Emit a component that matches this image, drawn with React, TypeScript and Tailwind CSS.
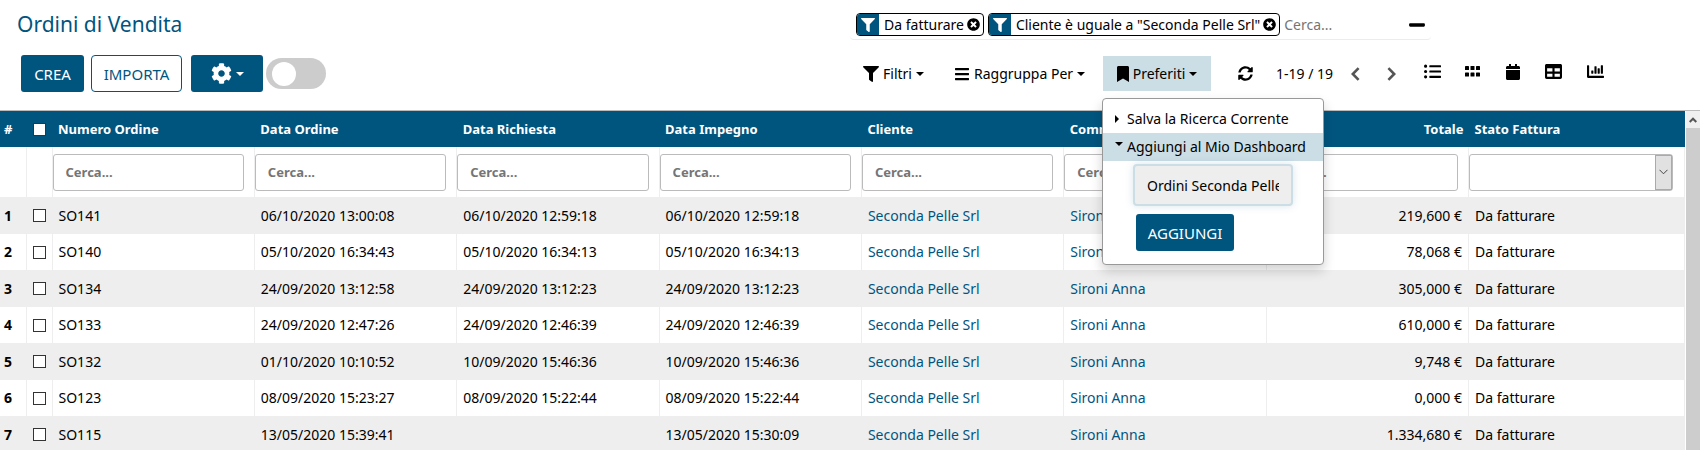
import { useState } from "react";
import {
  FaBars, FaBookmark, FaCalendar, FaChartBar, FaCog, FaFilter, FaListUl, FaMinus, FaSyncAlt, FaTable, FaTimesCircle,
} from "react-icons/fa";

const orders = [
  ["SO141", "06/10/2020 13:00:08", "06/10/2020 12:59:18", "06/10/2020 12:59:18", "219,600 €"],
  ["SO140", "05/10/2020 16:34:43", "05/10/2020 16:34:13", "05/10/2020 16:34:13", "78,068 €"],
  ["SO134", "24/09/2020 13:12:58", "24/09/2020 13:12:23", "24/09/2020 13:12:23", "305,000 €"],
  ["SO133", "24/09/2020 12:47:26", "24/09/2020 12:46:39", "24/09/2020 12:46:39", "610,000 €"],
  ["SO132", "01/10/2020 10:10:52", "10/09/2020 15:46:36", "10/09/2020 15:46:36", "9,748 €"],
  ["SO123", "08/09/2020 15:23:27", "08/09/2020 15:22:44", "08/09/2020 15:22:44", "0,000 €"],
  ["SO115", "13/05/2020 15:39:41", "", "13/05/2020 15:30:09", "1.334,680 €"],
];

const columns = ["Numero Ordine", "Data Ordine", "Data Richiesta", "Data Impegno", "Cliente", "Commerciale", "Totale"];

function Caret() {
  return (
    <svg viewBox="0 0 8 4" className="h-1 w-2 shrink-0 fill-current" aria-hidden="true">
      <path d="M0 0h8L4 4z" />
    </svg>
  );
}

function GridIcon() {
  return (
    <svg viewBox="0 0 15 11" className="h-[11px] w-[15px] fill-current" aria-hidden="true">
      {[0, 5.5, 11].map((x) => [0, 6.5].map((y) => <rect key={`${x}-${y}`} x={x} y={y} width="4" height="4" rx="0.6" />))}
    </svg>
  );
}

function Chevron({ left = false }: { left?: boolean }) {
  return (
    <svg viewBox="0 0 9 14" className="h-[14px] w-[9px] fill-none stroke-[#555] stroke-[2.6]" aria-hidden="true">
      <path d={left ? "M7.6 1.2 1.8 7l5.8 5.8" : "M1.4 1.2 7.2 7l-5.8 5.8"} />
    </svg>
  );
}

function Chip({ children }: { children: string }) {
  return (
    <span className="flex h-[23px] items-center overflow-hidden rounded border border-black">
      <span className="flex h-full w-[22px] shrink-0 items-center justify-center bg-[#00557f] text-white">
        <FaFilter size={14} />
      </span>
      <span className="pl-[5px] whitespace-nowrap">{children}</span>
      <button type="button" aria-label="Rimuovi" className="px-[3px]">
        <FaTimesCircle size={13} />
      </button>
    </span>
  );
}

function Check({ label }: { label: string }) {
  return (
    <input
      type="checkbox"
      aria-label={label}
      className="mx-auto block size-[13px] appearance-none border border-[#333] bg-white checked:bg-[#00557f]"
    />
  );
}

export default function App() {
  const [board, setBoard] = useState("Ordini Seconda Pelle Srl");
  return (
    <div className="flex h-screen flex-col overflow-hidden bg-white font-['Noto_Sans',sans-serif] text-[14px] leading-5 text-black">
      <header className="flex h-[110px] shrink-0">
        <div className="w-1/2">
          <h1 className="pt-2.5 pl-[17px] text-[21px] leading-7 text-[#00557f]">Ordini di Vendita</h1>
          <div className="mt-[17px] flex items-center pl-[21px] text-[15px]">
            <button type="button" className="h-[37px] w-[63px] rounded-[3px] bg-[#00557f] text-white">CREA</button>
            <button type="button" className="ml-[7px] h-[37px] w-[91px] rounded border border-[#00557f] text-[#00557f]">
              IMPORTA
            </button>
            <button
              type="button"
              aria-label="Azioni"
              className="ml-[9px] flex h-[37px] w-[72px] items-center justify-center gap-1 rounded-[3px] bg-[#00557f] text-white"
            >
              <FaCog size={21} />
              <Caret />
            </button>
            <input
              type="checkbox"
              role="switch"
              aria-label="Attiva"
              className="ml-[3px] h-[31px] w-[60px] appearance-none rounded-full bg-[#ccc] p-1 pl-1.5 before:block before:size-6 before:rounded-full before:bg-white"
            />
          </div>
        </div>

        <div className="w-1/2">
          <div className="mr-[269px] flex h-10 items-center gap-1 rounded-b border-b border-[#ececec] pt-2.5 pl-1.5">
            <Chip>Da fatturare</Chip>
            <Chip>Cliente è uguale a "Seconda Pelle Srl"</Chip>
            <input aria-label="Cerca" placeholder="Cerca..." className="min-w-0 flex-1 outline-none placeholder:text-[#757575]" />
            <button type="button" aria-label="Riduci" className="mr-[5px]">
              <FaMinus size={18} />
            </button>
          </div>
          <div className="mt-4 flex h-[35px] items-center">
            <button type="button" className="ml-[13px] flex w-[91px] items-center gap-1">
              <FaFilter size={16} />Filtri<Caret />
            </button>
            <button type="button" className="flex w-[149px] items-center gap-1 whitespace-nowrap">
              <FaBars size={16} />Raggruppa Per<Caret />
            </button>
            <div className="relative h-full w-[108px]">
              <button type="button" className="flex h-full w-full items-center justify-center gap-1 bg-[#cbdde5]">
                <FaBookmark size={16} className="w-3" />Preferiti<Caret />
              </button>
              <div className="absolute top-[42px] -left-px z-10 h-[167px] w-[222px] rounded border border-[#999] bg-white pt-1.5 shadow-[0_6px_12px_rgba(0,0,0,0.18)]">
                <button type="button" className="flex h-7 w-full items-center whitespace-nowrap">
                  <svg viewBox="0 0 4 8" className="mr-2 ml-3 h-2 w-1" aria-hidden="true"><path d="M0 0v8l4-4z" /></svg>
                  Salva la Ricerca Corrente
                </button>
                <button type="button" className="flex h-7 w-full items-center bg-[#cbdde5] whitespace-nowrap">
                  <svg viewBox="0 0 8 4" className="mr-1 mb-1.5 ml-3 h-1 w-2" aria-hidden="true"><path d="M0 0h8L4 4z" /></svg>
                  Aggiungi al Mio Dashboard
                </button>
                <div className="pt-[3px] pl-[30px]">
                  <input
                    aria-label="Nome"
                    value={board}
                    onChange={(e) => setBoard(e.target.value)}
                    className="block h-[42px] w-40 rounded border-2 border-[#cbdde5] bg-[#eee] px-3 shadow-[0_0_8px_rgba(0,85,127,0.15)] outline-none"
                  />
                  <button type="button" className="mt-2 ml-[3px] block h-[37px] w-[98px] rounded-[3px] bg-[#00557f] text-[15px] text-white">
                    AGGIUNGI
                  </button>
                </div>
              </div>
            </div>
            <button type="button" aria-label="Aggiorna" className="ml-[27px]"><FaSyncAlt size={15} /></button>
            <span className="ml-[23px] w-[75px] whitespace-nowrap">1-19 / 19</span>
            <button type="button" aria-label="Precedente"><Chevron left /></button>
            <button type="button" aria-label="Successiva" className="ml-[27px]"><Chevron /></button>
            <div className="mb-1 flex items-center pl-7">
              <button type="button" aria-label="Elenco" className="w-[41px]"><FaListUl size={17} /></button>
              <button type="button" aria-label="Kanban" className="w-10"><GridIcon /></button>
              <button type="button" aria-label="Calendario" className="w-10"><FaCalendar size={16} /></button>
              <button type="button" aria-label="Pivot" className="w-[42px]"><FaTable size={17} /></button>
              <button type="button" aria-label="Grafico"><FaChartBar size={17} /></button>
            </div>
          </div>
        </div>
      </header>

      <div className="flex min-h-0 flex-1 overflow-hidden border-t border-[#bbb]">
        <div className="min-w-0 flex-1 overflow-hidden">
          <table className="w-full table-fixed border-collapse text-left">
            <colgroup>
              <col className="w-[26px]" />
              <col className="w-[26px]" />
              {columns.map((c) => <col key={c} />)}
              <col className="w-[216px]" />
            </colgroup>
            <thead>
              <tr className="h-9 bg-[#00557f] text-[13px] text-white">
                <th className="pl-1">#</th>
                <th><Check label="Seleziona tutto" /></th>
                {columns.map((c) => (
                  <th key={c} className={c === "Totale" ? "pr-[5px] text-right" : "pl-1.5"}>{c}</th>
                ))}
                <th className="pl-1.5">Stato Fattura</th>
              </tr>
              <tr className="h-[50px]">
                <td className="border-r border-[#eee]" />
                <td className="border-r border-[#eee]" />
                {columns.map((c) => (
                  <td key={c} className="border-r border-[#eee] pr-2.5">
                    <input
                      aria-label={c}
                      placeholder="Cerca..."
                      className="block h-[37px] w-full rounded-[3px] border border-[#bbb] px-3 text-[13px] font-bold outline-none placeholder:text-[#757575]"
                    />
                  </td>
                ))}
                <td className="border-r border-[#eee] pr-[11px]">
                  <div className="relative">
                    <select aria-label="Stato Fattura" className="block h-[37px] w-full appearance-none rounded-[3px] border border-[#bbb] bg-white px-3">
                      <option value="" />
                    </select>
                    <span className="pointer-events-none absolute inset-y-px right-px flex w-[17px] items-center justify-center border border-[#aaa] bg-[#e1e1e1]">
                      <svg viewBox="0 0 9 6" className="h-1.5 w-[9px] fill-none stroke-[#444]" aria-hidden="true">
                        <path d="m.5.8 4 4 4-4" />
                      </svg>
                    </span>
                  </div>
                </td>
              </tr>
            </thead>
            <tbody>
              {orders.map(([num, ordered, requested, committed, total], i) => (
                <tr key={num} className="h-9 odd:h-[37px] odd:bg-[#eee] [&>td]:border-r [&>td]:border-[#eee] [&>td]:px-1.5">
                  <th className="border-r border-[#eee] pl-1">{i + 1}</th>
                  <td><Check label={num} /></td>
                  <td>{num}</td>
                  <td>{ordered}</td>
                  <td>{requested}</td>
                  <td>{committed}</td>
                  <td><a href="#cliente" className="text-[#00557f]">Seconda Pelle Srl</a></td>
                  <td><a href="#commerciale" className="text-[#00557f]">Sironi Anna</a></td>
                  <td className="text-right">{total}</td>
                  <td>Da fatturare</td>
                </tr>
              ))}
            </tbody>
          </table>
        </div>
        <div className="ml-px flex w-[14px] shrink-0 flex-col bg-[#cdcdcd]">
          <div className="flex h-[17px] items-center justify-center bg-[#f0f0f0]">
            <svg viewBox="0 0 8 6" className="h-1.5 w-2 fill-none stroke-[#555] stroke-2" aria-hidden="true">
              <path d="m.7 5 3.3-3.3L7.3 5" />
            </svg>
          </div>
        </div>
      </div>
    </div>
  );
}
